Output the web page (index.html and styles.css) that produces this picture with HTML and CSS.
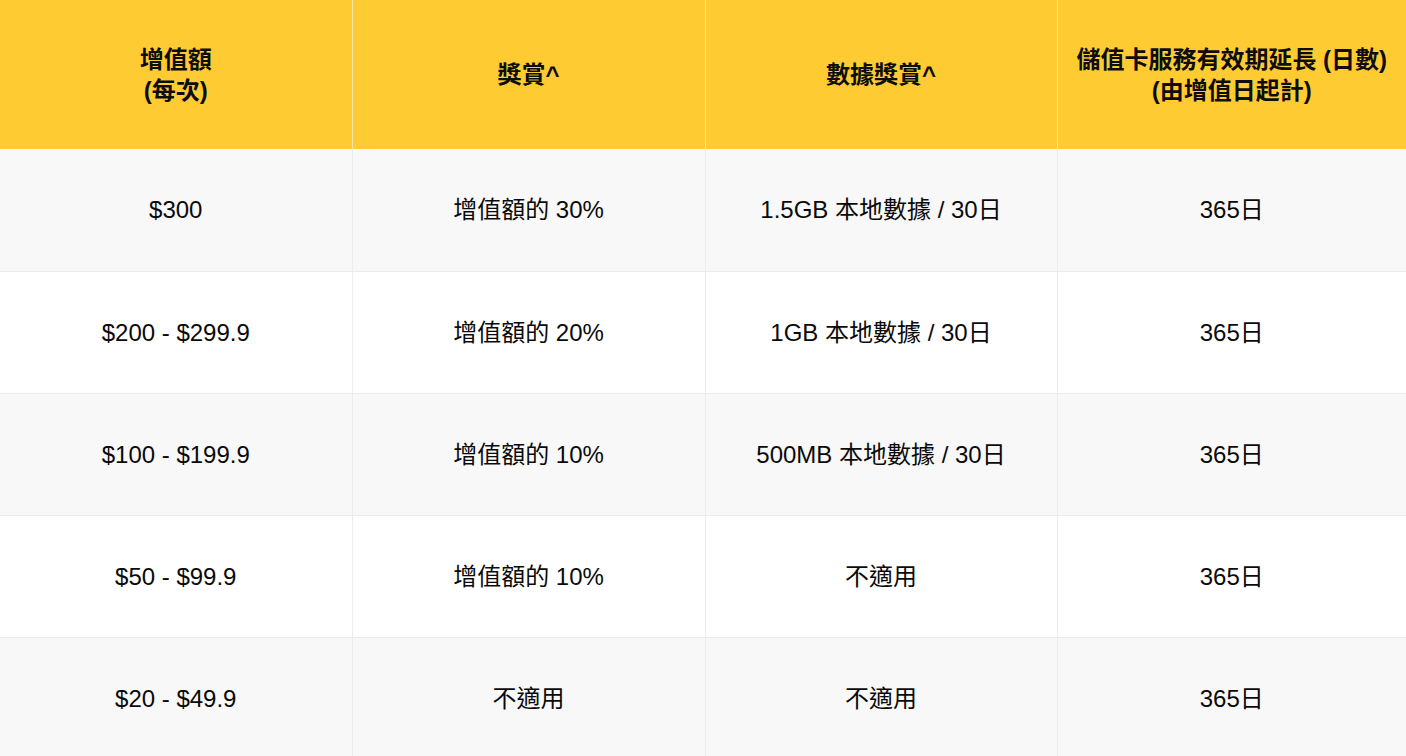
FILE: index.html
```html
<!DOCTYPE html>
<html lang="zh-Hant">
<head>
<meta charset="utf-8">
<title>增值獎賞</title>
<link rel="stylesheet" href="styles.css">
</head>
<body>
<table class="rates">
  <colgroup><col class="c1"><col class="c2"><col class="c3"><col class="c4"></colgroup>
  <thead>
    <tr>
      <th>增值額<br>(每次)</th>
      <th>獎賞^</th>
      <th>數據獎賞^</th>
      <th>儲值卡服務有效期延長 (日數)<br>(由增值日起計)</th>
    </tr>
  </thead>
  <tbody>
    <tr><td>$300</td><td>增值額的 30%</td><td>1.5GB 本地數據 / 30日</td><td>365日</td></tr>
    <tr><td>$200 - $299.9</td><td>增值額的 20%</td><td>1GB 本地數據 / 30日</td><td>365日</td></tr>
    <tr><td>$100 - $199.9</td><td>增值額的 10%</td><td>500MB 本地數據 / 30日</td><td>365日</td></tr>
    <tr><td>$50 - $99.9</td><td>增值額的 10%</td><td>不適用</td><td>365日</td></tr>
    <tr><td>$20 - $49.9</td><td>不適用</td><td>不適用</td><td>365日</td></tr>
  </tbody>
</table>
</body>
</html>
```
FILE: styles.css
```css
html, body {
  margin: 0;
  padding: 0;
  background: #ffffff;
}
body {
  font-family: "Liberation Sans", "Noto Sans CJK TC", Arial, sans-serif;
  color: #0a0a0a;
}
.rates {
  width: 100%;
  table-layout: fixed;
  border-collapse: collapse;
}
.rates .c1 { width: 352px; }
.rates .c2 { width: 353px; }
.rates .c3 { width: 352px; }
.rates .c4 { width: auto; }
.rates th {
  background: #ffcb32;
  font-size: 24px;
  font-weight: bold;
  line-height: 31px;
  height: 149px;
  padding: 0 8px;
  box-sizing: border-box;
  text-align: center;
  vertical-align: middle;
  border-left: 1px solid #fbe7a6;
  color: #0d0d0d;
}
.rates th:first-child,
.rates td:first-child {
  border-left: none;
}
.rates td {
  font-size: 24px;
  line-height: 31px;
  height: 122px;
  padding: 0 8px;
  box-sizing: border-box;
  text-align: center;
  vertical-align: middle;
  border-left: 1px solid #ececec;
  border-bottom: 1px solid #ececec;
}
.rates tbody tr:nth-child(odd) td {
  background: #f8f8f8;
}
.rates tbody tr:nth-child(even) td {
  background: #ffffff;
}
```
